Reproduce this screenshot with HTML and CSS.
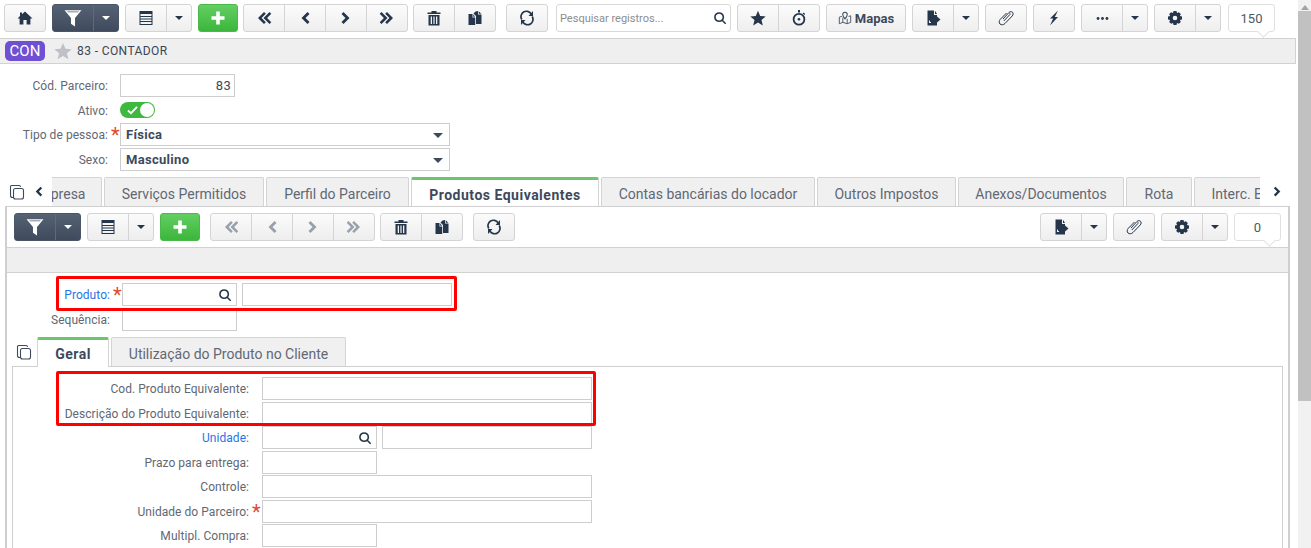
FILE: index.html
```html
<!DOCTYPE html>
<html lang="pt-BR">
<head>
<meta charset="utf-8">
<title>Parceiro</title>
<link rel="stylesheet" href="styles.css">
</head>
<body>
<svg class="defs" width="0" height="0" aria-hidden="true">
  <symbol id="i-home" viewBox="0 0 16 16"><path d="M8 1.500 15.500 8.400H13.400V14.500H9.600V10H6.400V14.500H2.600V8.400H.5L3 6.100V2.500H5V4.300Z"/></symbol>
  <symbol id="i-filter" viewBox="0 0 16 16"><path fill-rule="evenodd" d="M.5 1H15.500L9.800 8V15.500L6.200 13V8ZM2.900 2.200 3.400 2.800H12.600L13.100 2.200Z"/></symbol>
  <symbol id="i-grid" viewBox="0 0 16 16"><path fill-rule="evenodd" d="M1.500 1H14.500V15H1.500ZM2.500 4V6H13.500V4ZM2.500 7V8.500H13.500V7ZM2.500 9.500V11H13.500V9.500ZM2.500 12V14H13.500V12Z"/></symbol>
  <symbol id="i-plus" viewBox="0 0 16 16"><path d="M6.200 1.500H9.800V6.200H14.500V9.800H9.800V14.500H6.200V9.800H1.500V6.200H6.200Z"/></symbol>
  <symbol id="i-first" viewBox="0 0 16 16"><path d="M8 2 2 8l6 6 1.800-1.800L5.600 8l4.200-4.200Z"/><path d="M13.500 2 7.500 8l6 6 1.800-1.800L11.100 8l4.200-4.200Z"/></symbol>
  <symbol id="i-prev" viewBox="0 0 16 16"><path d="M10.500 2 4.500 8l6 6 2-2L8.500 8l4-4Z"/></symbol>
  <symbol id="i-next" viewBox="0 0 16 16"><path d="M5.500 2 11.500 8l-6 6-2-2L7.500 8l-4-4Z"/></symbol>
  <symbol id="i-last" viewBox="0 0 16 16"><path d="M8 2 14 8l-6 6-1.800-1.800L10.400 8 6.200 3.800Z"/><path d="M2.500 2 8.500 8l-6 6L.7 12.200 4.900 8 .7 3.800Z"/></symbol>
  <symbol id="i-trash" viewBox="0 0 16 16"><path fill-rule="evenodd" d="M5.500 1H10.500V2.500H14.500V4H1.500V2.500H5.500ZM2.500 5H13.500V15.500H2.500ZM4.700 6.500V14H6V6.500ZM7.400 6.500V14H8.600V6.500ZM10 6.500V14H11.300V6.500Z"/></symbol>
  <symbol id="i-copy" viewBox="0 0 16 16"><path d="M8.500 1.500 11 1.100V4.500H14.500V14H9V6L6.500 3.500ZM11.700 1.300 14.300 3.800H11.700Z"/><path d="M1.500 4H5.500V7.500H8.200V15H1.500ZM6.200 4.200 8 6.800H6.200Z"/></symbol>
  <symbol id="i-refresh" viewBox="0 0 16 16"><path fill="none" stroke="currentColor" stroke-width="1.700" d="M2.800 9.500A5.400 5.400 0 0 1 12 3.800M13.200 6.500A5.400 5.400 0 0 1 4 12.200"/><path d="M14 1V6H9.500ZM2 15V10H6.500Z"/></symbol>
  <symbol id="i-search" viewBox="0 0 16 16"><path fill="none" stroke="currentColor" stroke-width="1.800" d="M7 2.200A4.800 4.800 0 1 0 7 11.800 4.800 4.800 0 1 0 7 2.200ZM10.500 10.500 14.500 14.500"/></symbol>
  <symbol id="i-star" viewBox="0 0 16 16"><path d="M8 .8 10.200 5.900 15.700 6.400 11.500 10 12.800 15.400 8 12.500 3.200 15.400 4.500 10 .3 6.400 5.800 5.900Z"/></symbol>
  <symbol id="i-timer" viewBox="0 0 16 16"><path d="M7 0H9V2.500H7Z"/><circle cx="8" cy="9.200" r="5.400" fill="none" stroke="currentColor" stroke-width="1.800"/><circle cx="8" cy="9.200" r="1.300"/><path d="M12.500 2.500 14.200 4 13.300 4.900 11.700 3.400Z"/></symbol>
  <symbol id="i-map" viewBox="0 0 16 16"><path fill="none" stroke="currentColor" stroke-width="1" d="M4.500 6 1.500 7V14.500L5.500 13 10.500 14.500 14.500 13V5.500L12 6.200M5.500 7.500V13M10.500 9V14.500"/><path fill="none" stroke="currentColor" stroke-width="1.200" d="M8 1.500A2.600 2.600 0 0 1 10.600 4C10.600 5.800 8 9 8 9S5.400 5.800 5.400 4A2.600 2.600 0 0 1 8 1.500Z"/></symbol>
  <symbol id="i-export" viewBox="0 0 16 16"><path fill-rule="evenodd" d="M2.500 .5H9V5H12V6.500L15.500 9.500 12 12.500V15.500H2.500ZM10 .8 12 4H10ZM4 10.500V13H6V12H5V10.500Z"/></symbol>
  <symbol id="i-clip" viewBox="0 0 16 16"><path fill="none" stroke="currentColor" stroke-width="1" d="M5 9 10.800 2.600C12 1.300 13.800 1.500 14.600 2.300 15.400 3.200 15.300 4.800 14.200 6L7 13.500C5.500 15 3.300 15.200 2 14 .8 12.800 1 10.800 2.300 9.300L8.500 3M5.800 11 11.800 4.600C12.500 3.900 12.100 3.200 11.500 3.200"/></symbol>
  <symbol id="i-bolt" viewBox="0 0 16 16"><path d="M12 .5 4 8.500H7.200L4 15.500 12 7H8.800Z"/></symbol>
  <symbol id="i-dots" viewBox="0 0 16 16"><circle cx="2.500" cy="8" r="1.700"/><circle cx="8" cy="8" r="1.700"/><circle cx="13.500" cy="8" r="1.700"/></symbol>
  <symbol id="i-gear" viewBox="0 0 16 16"><path fill-rule="evenodd" d="M6.500 1H9.500L10 3.100 11.900 2.200 13.800 4.100 12.900 6 15 6.500V9.500L12.900 10 13.800 11.900 11.900 13.800 10 12.900 9.500 15H6.500L6 12.900 4.100 13.800 2.200 11.900 3.100 10 1 9.500V6.500L3.100 6 2.200 4.100 4.100 2.200 6 3.100ZM8 5.700A2.300 2.300 0 1 0 8 10.300 2.300 2.300 0 1 0 8 5.700Z"/></symbol>
  <symbol id="i-pages" viewBox="0 0 16 16"><path fill="none" stroke="currentColor" stroke-width="1.100" d="M5 13.500H3.500C2.400 13.500 1.500 12.600 1.500 11.500V2.500C1.500 1.900 1.900 1.500 2.500 1.500H10C11 1.500 11.500 2 11.500 3"/><rect x="4.500" y="4.500" width="10" height="10.500" rx="2" fill="none" stroke="currentColor" stroke-width="1.100"/></symbol>
</svg>

<div class="app">
  <main class="main">
    <nav class="toolbar">
      <div class="group"><button class="seg seg-home"><svg class="ico"><use href="#i-home"/></svg></button></div>
      <div class="group dark"><button class="seg"><svg class="ico ico-lg"><use href="#i-filter"/></svg></button><button class="seg caret"><i class="tri"></i></button></div>
      <div class="group"><button class="seg"><svg class="ico"><use href="#i-grid"/></svg></button><button class="seg caret"><i class="tri"></i></button></div>
      <div class="group green"><button class="seg seg-add"><svg class="ico"><use href="#i-plus"/></svg></button></div>
      <div class="group gap5"><button class="seg"><svg class="ico"><use href="#i-first"/></svg></button><button class="seg"><svg class="ico"><use href="#i-prev"/></svg></button><button class="seg"><svg class="ico"><use href="#i-next"/></svg></button><button class="seg"><svg class="ico"><use href="#i-last"/></svg></button></div>
      <div class="group gap5"><button class="seg"><svg class="ico"><use href="#i-trash"/></svg></button><button class="seg"><svg class="ico"><use href="#i-copy"/></svg></button></div>
      <div class="group gap10"><button class="seg"><svg class="ico"><use href="#i-refresh"/></svg></button></div>
      <div class="search"><span class="search-text">Pesquisar registros...</span><svg class="ico ico-search"><use href="#i-search"/></svg></div>
      <div class="group"><button class="seg"><svg class="ico"><use href="#i-star"/></svg></button><button class="seg"><svg class="ico"><use href="#i-timer"/></svg></button></div>
      <div class="group"><button class="seg seg-maps"><svg class="ico ico-map"><use href="#i-map"/></svg><span>Mapas</span></button></div>
      <div class="group"><button class="seg"><svg class="ico"><use href="#i-export"/></svg></button><button class="seg caret"><i class="tri"></i></button></div>
      <div class="group"><button class="seg seg-one"><svg class="ico"><use href="#i-clip"/></svg></button></div>
      <div class="group"><button class="seg seg-one"><svg class="ico"><use href="#i-bolt"/></svg></button></div>
      <div class="group"><button class="seg"><svg class="ico ico-dots"><use href="#i-dots"/></svg></button><button class="seg caret"><i class="tri"></i></button></div>
      <div class="group"><button class="seg"><svg class="ico"><use href="#i-gear"/></svg></button><button class="seg caret"><i class="tri"></i></button></div>
      <div class="pager pager-top">150</div>
    </nav>

    <header class="titlebar">
      <span class="badge">CON</span>
      <svg class="ico ico-fav"><use href="#i-star"/></svg>
      <span class="title">83 - CONTADOR</span>
    </header>

    <section class="form form-top">
      <div class="row"><label class="lbl">Cód. Parceiro:</label><span class="req"></span><div class="input w115 num">83</div></div>
      <div class="row"><label class="lbl">Ativo:</label><span class="req"></span><div class="toggle"><svg class="check" viewBox="0 0 12 10"><path d="M1 5.500 4.300 8.500 11 1.500" fill="none" stroke="#fff" stroke-width="2"/></svg><i class="knob"></i></div></div>
      <div class="row"><label class="lbl">Tipo de pessoa:</label><span class="req">*</span><div class="input w330 select">Física<i class="tri"></i></div></div>
      <div class="row"><label class="lbl">Sexo:</label><span class="req"></span><div class="input w330 select">Masculino<i class="tri"></i></div></div>
    </section>

    <div class="tabbar">
      <div class="tabctl tabctl-left"><svg class="ico ico-pages"><use href="#i-pages"/></svg><svg class="ico ico-chev"><use href="#i-prev"/></svg></div>
      <div class="tabclip">
        <div class="tabs tabs-scrolled">
          <span class="tab tab-a">Empresa</span>
          <span class="tab tab-b">Serviços Permitidos</span>
          <span class="tab tab-c">Perfil do Parceiro</span>
          <span class="tab active tab-d">Produtos Equivalentes</span>
          <span class="tab tab-e">Contas bancárias do locador</span>
          <span class="tab tab-f">Outros Impostos</span>
          <span class="tab tab-g">Anexos/Documentos</span>
          <span class="tab tab-h">Rota</span>
          <span class="tab tab-i">Interc. Eletrônico</span>
        </div>
      </div>
      <div class="tabctl tabctl-right"><svg class="ico ico-chev"><use href="#i-next"/></svg></div>
    </div>

    <section class="panel">
      <nav class="toolbar toolbar-inner">
        <div class="group dark"><button class="seg"><svg class="ico ico-lg"><use href="#i-filter"/></svg></button><button class="seg caret"><i class="tri"></i></button></div>
        <div class="group"><button class="seg"><svg class="ico"><use href="#i-grid"/></svg></button><button class="seg caret"><i class="tri"></i></button></div>
        <div class="group green"><button class="seg seg-add"><svg class="ico"><use href="#i-plus"/></svg></button></div>
        <div class="group gap10 off"><button class="seg"><svg class="ico"><use href="#i-first"/></svg></button><button class="seg"><svg class="ico"><use href="#i-prev"/></svg></button><button class="seg"><svg class="ico"><use href="#i-next"/></svg></button><button class="seg"><svg class="ico"><use href="#i-last"/></svg></button></div>
        <div class="group gap5"><button class="seg"><svg class="ico"><use href="#i-trash"/></svg></button><button class="seg"><svg class="ico"><use href="#i-copy"/></svg></button></div>
        <div class="group gap10"><button class="seg"><svg class="ico"><use href="#i-refresh"/></svg></button></div>
        <div class="group push"><button class="seg"><svg class="ico"><use href="#i-export"/></svg></button><button class="seg caret"><i class="tri"></i></button></div>
        <div class="group"><button class="seg seg-one"><svg class="ico"><use href="#i-clip"/></svg></button></div>
        <div class="group"><button class="seg"><svg class="ico"><use href="#i-gear"/></svg></button><button class="seg caret"><i class="tri"></i></button></div>
        <div class="pager">0</div>
      </nav>
      <div class="band"></div>

      <div class="form form-product">
        <div class="row"><label class="lbl lbl-p link">Produto:</label><span class="req">*</span><div class="input w115 lookup"><svg class="ico ico-search"><use href="#i-search"/></svg></div><div class="input w210 ml5"></div></div>
        <div class="row"><label class="lbl lbl-p">Sequência:</label><span class="req"></span><div class="input w115"></div></div>
        <div class="mark mark-a"></div>
      </div>

      <div class="subtabs">
        <svg class="ico ico-pages"><use href="#i-pages"/></svg>
        <span class="tab active subtab-a">Geral</span>
        <span class="tab subtab-b">Utilização do Produto no Cliente</span>
      </div>

      <div class="subpanel">
        <div class="form form-sub">
          <div class="row"><label class="lbl lbl-s">Cod. Produto Equivalente:</label><span class="req"></span><div class="input w330"></div></div>
          <div class="row"><label class="lbl lbl-s">Descrição do Produto Equivalente:</label><span class="req"></span><div class="input w330"></div></div>
          <div class="row"><label class="lbl lbl-s link">Unidade:</label><span class="req"></span><div class="input w115 lookup"><svg class="ico ico-search"><use href="#i-search"/></svg></div><div class="input w210 ml5"></div></div>
          <div class="row"><label class="lbl lbl-s">Prazo para entrega:</label><span class="req"></span><div class="input w115"></div></div>
          <div class="row"><label class="lbl lbl-s">Controle:</label><span class="req"></span><div class="input w330"></div></div>
          <div class="row"><label class="lbl lbl-s">Unidade do Parceiro:</label><span class="req">*</span><div class="input w330"></div></div>
          <div class="row"><label class="lbl lbl-s">Multipl. Compra:</label><span class="req"></span><div class="input w115"></div></div>
          <div class="mark mark-b"></div>
        </div>
      </div>
    </section>
  </main>

  <aside class="scrollbar"><i class="sb-up"></i><i class="sb-thumb"></i></aside>
</div>
</body>
</html>
```

FILE: styles.css
```css
* { box-sizing: border-box; }
html, body { margin: 0; height: 100%; overflow: hidden; background: #fff; }
body { font-family: Roboto, "Liberation Sans", Arial, sans-serif; font-size: 12px; color: #3d4a5c; }
.defs { position: absolute; }

.app { display: flex; height: 548px; overflow: hidden; }
.main { width: 1298px; flex: none; }

/* scrollbar */
.scrollbar { width: 13px; flex: none; background: #f1f1f1; display: flex; flex-direction: column; align-items: center; }
.sb-up { width: 0; height: 0; margin: 5px 0 4px; border: 4px solid transparent; border-top: 0; border-bottom: 5px solid #a3a3a3; flex: none; }
.sb-thumb { width: 13px; height: 390px; margin-top: -3px; background: #c1c1c1; flex: none; }

/* toolbars */
.toolbar { display: flex; align-items: flex-start; gap: 6px; height: 38px; padding: 4px 0 0 4px; }
.group { display: flex; height: 28px; border: 1px solid #d4d4d4; border-radius: 3px; background: linear-gradient(#fbfbfb, #eeeeee); color: #25364a; }
.seg { display: flex; align-items: center; justify-content: center; width: 41px; height: 26px; padding: 0; border: 0; border-left: 1px solid #d4d4d4; background: none; color: inherit; font: inherit; }
.seg:first-child { border-left: 0; width: 40px; }
.seg.caret { width: 25px; }
.seg.seg-add { width: 38px; }
.seg.seg-maps { width: 78px; gap: 3px; font-size: 13px; font-weight: 700; color: #3d4a5c; }
.gap5 { margin-left: -1px; }
.gap10 { margin-left: 4px; }
.dark { background: linear-gradient(#556274, #3f4b5c); border-color: #4a5666; color: #fff; }
.dark .seg { border-left-color: #5f6b7b; }
.dark .tri { border-top-color: #fff; }
.green { background: linear-gradient(#62cf62, #3cb63c); border-color: #4ab94a; color: #fff; }
.off { color: #98a1ab; }
.push { margin-left: auto; }

.ico { width: 16px; height: 16px; fill: currentColor; flex: none; display: block; }
.ico-lg { width: 18px; height: 18px; }
.ico-dots { width: 13px; height: 13px; }
.ico-map { width: 14px; height: 14px; }
.ico-search { width: 14px; height: 14px; color: #25364a; }
.tri { display: block; width: 0; height: 0; border: 4px solid transparent; border-bottom: 0; border-top: 4px solid #25364a; }

.search { display: flex; align-items: center; justify-content: space-between; width: 175px; height: 28px; margin-left: 2px; padding: 0 3px; border: 1px solid #d8d8d8; border-radius: 3px; background: #fff; }
.search-text { font-size: 11px; color: #8d8d8d; }

.pager { position: relative; width: 47px; height: 28px; display: flex; align-items: center; justify-content: center; border: 1px solid #e0e0e0; border-radius: 3px; background: #fff; font-size: 13px; color: #4d5866; }
.pager-top { margin-left: 1px; }
.pager::after { content: ""; position: absolute; left: 30px; bottom: -5px; width: 8px; height: 8px; background: #fff; border-right: 1px solid #e0e0e0; border-bottom: 1px solid #e0e0e0; transform: rotate(45deg); }

/* title */
.titlebar { display: flex; align-items: center; height: 26px; margin-right: 2px; padding-left: 5px; background: #efefef; border: 1px solid #d2d2d2; border-width: 1px 1px 1px 0; }
.badge { display: flex; align-items: center; justify-content: center; width: 40px; height: 20px; border-radius: 5px; background: #6f4fd2; color: #fff; font-size: 15px; }
.ico-fav { width: 18px; height: 18px; margin-left: 9px; color: #bfc1c6; }
.title { margin-left: 5px; font-size: 12px; font-weight: 400; letter-spacing: .4px; color: #3a4656; }

/* forms */
.form { display: grid; grid-auto-rows: 24.5px; position: relative; }
.form-top { margin-top: 10px; }
.row { display: flex; align-items: flex-start; }
.lbl { flex: none; width: 108px; height: 23px; line-height: 24px; text-align: right; white-space: nowrap; font-size: 12px; letter-spacing: .05px; color: #5f6874; }
.req { flex: none; width: 12px; height: 23px; line-height: 25px; padding-left: 3px; font-size: 20px; color: #e0492f; overflow: hidden; }
.link { color: #1f76e6; }
.input { flex: none; position: relative; height: 23px; border: 1px solid #cdcdcd; background: #fff; font-size: 13px; line-height: 21px; color: #3d4a5c; }
.w115 { width: 115px; }
.w210 { width: 210px; }
.w330 { width: 330px; }
.ml5 { margin-left: 5px; }
.num { padding-right: 3px; text-align: right; font-size: 13px; letter-spacing: .3px; }
.select { padding-left: 5px; font-weight: 700; letter-spacing: .3px; }
.select .tri { position: absolute; right: 6px; top: 9px; border-width: 5px 5px 0; border-top-color: #3d4a5c; }
.lookup .ico-search { position: absolute; right: 4px; top: 4px; }

.toggle { position: relative; width: 35px; height: 16px; margin-top: 3px; border-radius: 8px; background: #3fb83f; }
.check { position: absolute; left: 7px; top: 3px; width: 11px; height: 10px; }
.knob { position: absolute; right: 1px; top: 1px; width: 14px; height: 14px; border-radius: 50%; background: #fff; }

/* tabs */
.tabbar { display: flex; height: 29px; margin-top: 5px; }
.tabctl { flex: none; display: flex; align-items: center; background: #fff; color: #25364a; }
.tabctl-left { width: 52px; padding-left: 9px; gap: 7px; }
.tabctl-right { width: 30px; padding-left: 11px; }
.ico-chev { width: 13px; height: 13px; }
.ico-pages { color: #3d4a5c; }
.tabclip { flex: none; width: 1208px; overflow: hidden; }
.tabs { display: flex; gap: 2px; height: 29px; }
.tabs-scrolled { margin-left: -32px; }
.tab { flex: none; display: flex; align-items: center; justify-content: center; height: 29px; padding-top: 4px; white-space: nowrap; font-size: 14px; color: #5f6874; background: #f1f0f0; border: 1px solid #d4d4d4; border-bottom: 0; border-radius: 2px 2px 0 0; }
.tab.active { background: #fff; border-top: 3px solid #6cc66c; font-weight: 700; letter-spacing: .5px; color: #3d4a5c; padding-top: 2px; position: relative; z-index: 1; height: 30px; }
.tab-a { width: 82px; padding-right: 6px; }
.tab-b { width: 160px; }
.tab-c { width: 143px; }
.tab-d { width: 188px; }
.tab-e { width: 214px; }
.tab-f { width: 139px; }
.tab-g { width: 166px; }
.tab-h { width: 66px; }
.tab-i { width: 140px; }

/* panel */
.panel { margin: 0 8px 0 5px; height: 400px; border: 1px solid #cfcfcf; border-bottom: 0; border-left-width: 2px; border-right-width: 2px; }
.toolbar-inner { padding: 6px 7px 0 7px; height: 34px; }
.band { height: 26px; margin-top: 6px; background: #efefef; border-top: 1px solid #d2d2d2; border-bottom: 1px solid #d2d2d2; }
.form-product { margin-top: 10px; }
.lbl-p { width: 103px; }
.lbl-s { width: 236px; }

.subtabs { display: flex; gap: 2px; height: 29px; margin-top: 5px; padding-left: 9px; align-items: flex-start; }
.subtabs .ico-pages { margin: 7px 3px 0 0; }
.tab.subtab-a { width: 72px; padding-top: 1px; }
.subtab-b { width: 235px; }
.subpanel { margin: 0 5px 0 5px; height: 200px; border: 1px solid #cfcfcf; }
.form-sub { padding-top: 10px; }
.form-sub .req { width: 13px; }

/* red highlight boxes drawn over the screenshot */
.mark { position: absolute; border: 3px solid #f00; border-radius: 2px; pointer-events: none; }
.mark-a { left: 49px; top: -7px; width: 401px; height: 35px; }
.mark-b { left: 43px; top: 4px; width: 540px; height: 55px; }
```
